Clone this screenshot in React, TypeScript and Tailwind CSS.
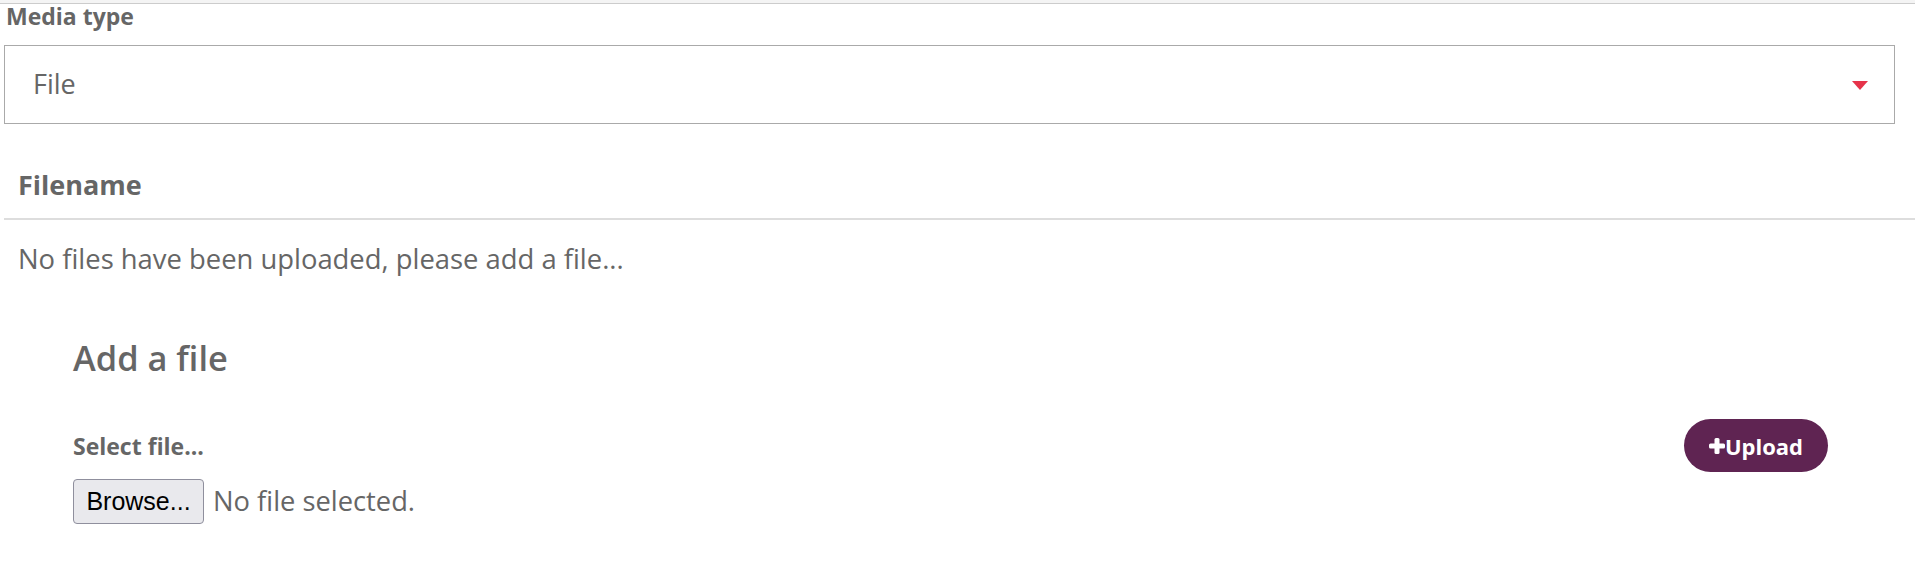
function MediaTypeSelect() {
  return (
    <div className="pl-[4px] pr-[20px]">
      <label className="block pl-[2px] text-[23px] leading-[24px] font-bold text-[#666]">Media type</label>
      <div className="mt-[17px] h-[79px] border border-[#aaa] flex items-center justify-between pl-[28px] pr-[26px]">
        <span className="text-[27px] text-[#666]">File</span>
        <svg width="16" height="9" viewBox="0 0 16 9" className="mt-[2px]">
          <path d="M0 0 L16 0 L8 9 Z" fill="#e6334a" />
        </svg>
      </div>
    </div>
  )
}

function FileTable() {
  return (
    <div className="mt-[43px] pl-[4px]">
      <div className="pl-[14px] pb-[15px] text-[27px] leading-[36px] font-bold text-[#666]">Filename</div>
      <div className="h-[2px] bg-[#ddd]" />
      <div className="pl-[14px] pt-[21px] text-[27.4px] leading-[36px] text-[#666]">
        No files have been uploaded, please add a file...
      </div>
    </div>
  )
}

function PlusIcon() {
  return (
    <svg width="16" height="16" viewBox="0 0 16 16" className="shrink-0">
      <rect x="5.5" y="0" width="5" height="16" rx="1.5" fill="white" />
      <rect x="0" y="5.5" width="16" height="5" rx="1.5" fill="white" />
    </svg>
  )
}

function AddFile() {
  return (
    <div className="mt-[59px] pl-[73px] pr-[87px]">
      <h2 className="text-[34.4px] leading-[44px] font-semibold text-[#666]">Add a file</h2>
      <div className="mt-[39px] flex items-center justify-between">
        <span className="text-[23px] leading-[30px] font-bold text-[#666]">Select file...</span>
        <button className="w-[144px] h-[53px] rounded-full bg-[#5f2452] text-white flex items-center justify-center">
          <PlusIcon />
          <span className="text-[22px] font-bold leading-none">Upload</span>
        </button>
      </div>
      <div className="mt-[7px] flex items-center">
        <button className="w-[131px] h-[45px] rounded-[4px] border border-[#8f8f9d] bg-[#e9e9ed] text-black text-[25px] font-['Liberation_Sans',Arial,sans-serif]">
          Browse...
        </button>
        <span className="ml-[9px] text-[27.3px] text-[#666]">No file selected.</span>
      </div>
    </div>
  )
}

export default function App() {
  return (
    <div className="w-[1915px] h-[564px] bg-white font-['Open_Sans',sans-serif] overflow-hidden">
      <div className="h-[3px] bg-[#f4f4f4]" />
      <div className="border-t border-[#ccc]">
        <MediaTypeSelect />
        <FileTable />
        <AddFile />
      </div>
    </div>
  )
}
